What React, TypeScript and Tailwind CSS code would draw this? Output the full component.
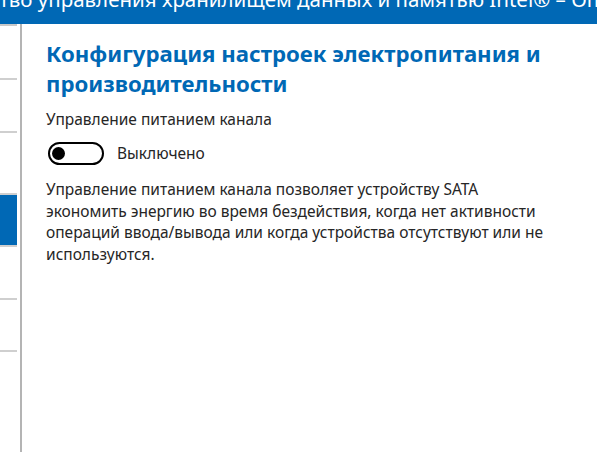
import { useState } from "react";

const navItems = [
  { h: "h-[54px]", active: false },
  { h: "h-[53px]", active: false },
  { h: "h-[62px]", active: false },
  { h: "h-[52px]", active: true },
  { h: "h-[53px]", active: false },
  { h: "h-[52px]", active: false },
];

export default function App() {
  const [enabled, setEnabled] = useState(false);

  return (
    <div className="w-[597px] h-[452px] bg-white overflow-hidden flex flex-col font-['Noto_Sans',sans-serif] text-[#262626]">
      {/* Header, scrolled so the start of the title is cut off */}
      <div className="h-[24px] shrink-0 bg-[#0068b5] overflow-hidden">
        <p className="whitespace-nowrap text-white text-[20.5px] leading-[20px] -mt-[11px] -ml-[60px]">
          Средство управления хранилищем данных и памятью Intel® – Оптимизация
        </p>
      </div>

      <div className="flex flex-1 min-h-0">
        {/* Sidebar */}
        <nav className="w-[22px] shrink-0 border-r-2 border-[#b4b4b4] pr-[3px]">
          <div className="border-t-2 border-[#c8c8c8]">
            {navItems.map((item, i) => (
              <div
                key={i}
                className={
                  item.h +
                  " border-b-2 border-[#cfcfcf] " +
                  (item.active ? "bg-[#0068b5]" : "")
                }
              />
            ))}
          </div>
        </nav>

        {/* Content */}
        <main className="flex-1 pl-[24px] pr-[38px] pt-[15px]">
          <h1 className="text-[22.2px] leading-[30px] font-bold text-[#0068b5]">
            Конфигурация настроек электропитания и производительности
          </h1>

          <p className="mt-[10px] text-[15.5px] leading-[21px]">Управление питанием канала</p>

          <div className="mt-[12px] flex items-center gap-[13px]">
            <button
              onClick={() => setEnabled(e => !e)}
              className="ml-[2px] w-[56px] h-[23px] rounded-full border-2 border-black flex items-center px-[2px]"
            >
              <span
                className={
                  "w-[13px] h-[13px] rounded-full bg-black " + (enabled ? "ml-auto" : "")
                }
              />
            </button>
            <span className="text-[15.5px] leading-[21px]">{enabled ? "Включено" : "Выключено"}</span>
          </div>

          <p className="mt-[14px] text-[15.5px] leading-[21.5px]">
            Управление питанием канала позволяет устройству SATA экономить энергию во время
            бездействия, когда нет активности операций ввода/вывода или когда устройства
            отсутствуют или не используются.
          </p>
        </main>
      </div>
    </div>
  );
}
